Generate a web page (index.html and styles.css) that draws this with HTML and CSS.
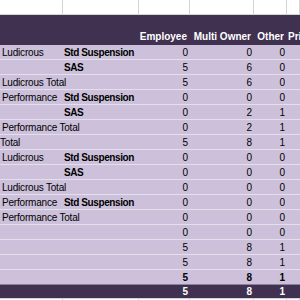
FILE: index.html
```html
<!DOCTYPE html>
<html>
<head>
<meta charset="utf-8">
<link rel="stylesheet" href="styles.css">
</head>
<body>
<div class="sheet">
  <div class="row top">
    <div class="c"></div><div class="c"></div><div class="c"></div><div class="c"></div><div class="c"></div><div class="c"></div>
  </div>
  <div class="row head">
    <div class="c"></div><div class="c"></div>
    <div class="c num">Employee</div><div class="c num">Multi Owner</div><div class="c num">Other</div><div class="c lbl">Private</div>
  </div>
  <div class="row body"><div class="c a">Ludicrous</div><div class="c b">Std Suspension</div><div class="c n">0</div><div class="c n">0</div><div class="c n">0</div><div class="c"></div></div>
  <div class="row body"><div class="c a"></div><div class="c b">SAS</div><div class="c n">5</div><div class="c n">6</div><div class="c n">0</div><div class="c"></div></div>
  <div class="row body"><div class="c a">Ludicrous Total</div><div class="c b"></div><div class="c n">5</div><div class="c n">6</div><div class="c n">0</div><div class="c"></div></div>
  <div class="row body"><div class="c a">Performance</div><div class="c b">Std Suspension</div><div class="c n">0</div><div class="c n">0</div><div class="c n">0</div><div class="c"></div></div>
  <div class="row body"><div class="c a"></div><div class="c b">SAS</div><div class="c n">0</div><div class="c n">2</div><div class="c n">1</div><div class="c"></div></div>
  <div class="row body"><div class="c a">Performance Total</div><div class="c b"></div><div class="c n">0</div><div class="c n">2</div><div class="c n">1</div><div class="c"></div></div>
  <div class="row body"><div class="c a flush">Total</div><div class="c b"></div><div class="c n">5</div><div class="c n">8</div><div class="c n">1</div><div class="c"></div></div>
  <div class="row body"><div class="c a">Ludicrous</div><div class="c b">Std Suspension</div><div class="c n">0</div><div class="c n">0</div><div class="c n">0</div><div class="c"></div></div>
  <div class="row body"><div class="c a"></div><div class="c b">SAS</div><div class="c n">0</div><div class="c n">0</div><div class="c n">0</div><div class="c"></div></div>
  <div class="row body"><div class="c a">Ludicrous Total</div><div class="c b"></div><div class="c n">0</div><div class="c n">0</div><div class="c n">0</div><div class="c"></div></div>
  <div class="row body"><div class="c a">Performance</div><div class="c b">Std Suspension</div><div class="c n">0</div><div class="c n">0</div><div class="c n">0</div><div class="c"></div></div>
  <div class="row body"><div class="c a">Performance Total</div><div class="c b"></div><div class="c n">0</div><div class="c n">0</div><div class="c n">0</div><div class="c"></div></div>
  <div class="row body"><div class="c a"></div><div class="c b"></div><div class="c n">0</div><div class="c n">0</div><div class="c n">0</div><div class="c"></div></div>
  <div class="row body"><div class="c a"></div><div class="c b"></div><div class="c n">5</div><div class="c n">8</div><div class="c n">1</div><div class="c"></div></div>
  <div class="row body"><div class="c a"></div><div class="c b"></div><div class="c n">5</div><div class="c n">8</div><div class="c n">1</div><div class="c"></div></div>
  <div class="row body last"><div class="c a"></div><div class="c b"></div><div class="c n strong">5</div><div class="c n strong">8</div><div class="c n strong">1</div><div class="c"></div></div>
  <div class="row grand"><div class="c"></div><div class="c"></div><div class="c n">5</div><div class="c n">8</div><div class="c n">1</div><div class="c"></div></div>
  <div class="row top"><div class="c"></div><div class="c"></div><div class="c"></div><div class="c"></div><div class="c"></div><div class="c"></div></div>
</div>
</body>
</html>
```

FILE: styles.css
```css
html, body {
  margin: 0;
  padding: 0;
  background: #ffffff;
  overflow: hidden;
}
.sheet {
  width: 300px;
  font-family: "Liberation Sans", Arial, sans-serif;
  font-size: 10px;
  color: #000000;
  overflow: hidden;
}
.row {
  display: grid;
  grid-template-columns: 63px 76px 51px 64px 33px 1fr;
  white-space: nowrap;
}
.c {
  min-width: 0;
}
.top {
  height: 14px;
  border-bottom: 1px solid #d4d4d4;
}
.top .c {
  border-right: 1px solid #d4d4d4;
}
.head {
  height: 30px;
  background: #403151;
  color: #ffffff;
  font-weight: bold;
  align-items: end;
  line-height: 14px;
}
.head .c {
  padding-bottom: 1px;
}
.head .num {
  text-align: right;
  padding-right: 3px;
}
.head .lbl {
  padding-left: 1px;
  overflow: hidden;
}
.body {
  height: 14px;
  line-height: 15px;
  background: #ccc0da;
  border-bottom: 1px solid #e4dfec;
}
.body.last {
  border-bottom-color: #8c7f9e;
}
.a {
  padding-left: 2px;
  overflow: visible;
  letter-spacing: -0.2px;
}
.a.flush {
  padding-left: 0;
}
.b {
  padding-left: 1px;
  font-weight: bold;
  letter-spacing: -0.4px;
}
.n {
  text-align: right;
  padding-right: 2px;
}
.strong {
  font-weight: bold;
}
.grand {
  height: 13px;
  line-height: 14px;
  background: #403151;
  color: #ffffff;
  font-weight: bold;
  border-bottom: 1px solid #d6cfe0;
}
```
